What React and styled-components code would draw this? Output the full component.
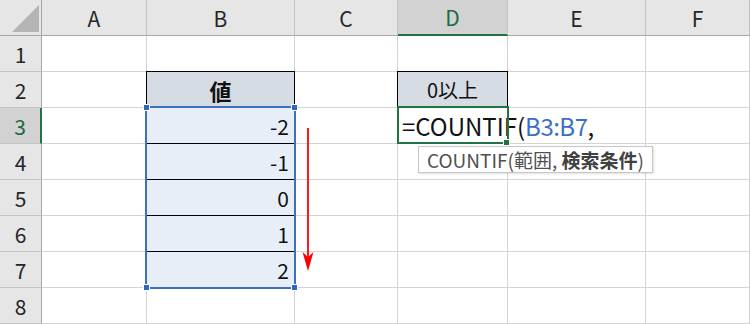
import React from "react";
import styled, { createGlobalStyle } from "styled-components";

const GlobalStyle = createGlobalStyle`
  html, body {
    margin: 0;
    padding: 0;
    background: #ffffff;
  }
  body {
    width: 750px;
    height: 324px;
    overflow: hidden;
    font-family: "Noto Sans CJK JP", "Noto Sans", sans-serif;
  }
`;

const COLS = [
  { id: "A", width: 105 },
  { id: "B", width: 148 },
  { id: "C", width: 103 },
  { id: "D", width: 110 },
  { id: "E", width: 138 },
  { id: "F", width: 104 },
];
const ROWS = [1, 2, 3, 4, 5, 6, 7, 8];
const VALUES = { 3: "-2", 4: "-1", 5: "0", 6: "1", 7: "2" };
const ACTIVE_COL = "D";
const ACTIVE_ROW = 3;

const Sheet = styled.div`
  display: grid;
  grid-template-columns: 42px ${COLS.map((c) => c.width + "px").join(" ")};
  grid-template-rows: repeat(9, 36px);
  width: 750px;
  height: 324px;
  overflow: hidden;
`;

const Corner = styled.div`
  box-sizing: border-box;
  background: #e6e6e6;
  border-right: 1px solid #a6a6a6;
  border-bottom: 1px solid #a6a6a6;

  svg {
    display: block;
  }
`;

const ColHead = styled.div`
  box-sizing: border-box;
  display: flex;
  align-items: center;
  justify-content: center;
  font-size: 21px;
  background: ${(p) => (p.$active ? "#d2d2d2" : "#e6e6e6")};
  color: ${(p) => (p.$active ? "#1d6b40" : "#262626")};
  border-right: 1px solid #c4c4c4;
  border-bottom: ${(p) => (p.$active ? "2px solid #217346" : "1px solid #a6a6a6")};
`;

const RowHead = styled.div`
  box-sizing: border-box;
  display: flex;
  align-items: center;
  justify-content: center;
  font-size: 21px;
  background: ${(p) => (p.$active ? "#d2d2d2" : "#e6e6e6")};
  color: ${(p) => (p.$active ? "#1d6b40" : "#262626")};
  border-right: ${(p) => (p.$active ? "2px solid #217346" : "1px solid #a6a6a6")};
  border-bottom: 1px solid #c4c4c4;
`;

const Cell = styled.div`
  position: relative;
  box-sizing: border-box;
  display: flex;
  align-items: center;
  background: #ffffff;
  border-right: 1px solid #d4d4d4;
  border-bottom: 1px solid #d4d4d4;
  white-space: nowrap;
`;

const TitleCell = styled(Cell)`
  justify-content: center;
  background: #d6dce4;
  border-right-color: #000000;
  border-bottom-color: #000000;
  box-shadow: -1px 0 0 #000000, 0 -1px 0 #000000, -1px -1px 0 #000000;
  font-size: ${(p) => (p.$bold ? "22px" : "20px")};
  font-weight: ${(p) => (p.$bold ? 700 : 400)};
  color: #111111;
`;

const ValueCell = styled(Cell)`
  justify-content: flex-end;
  padding-right: 5px;
  background: #e8eef8;
  border-bottom-color: ${(p) => (p.$last ? "#d4d4d4" : "#000000")};
  font-size: 21px;
  color: #111111;
`;

const EditCell = styled(Cell)`
  z-index: 1;
  padding-left: 4px;
  font-size: 24px;
  color: #111111;
`;

const RefText = styled.span`
  color: #3b6fc6;
  letter-spacing: -0.5px;
`;

const Caret = styled.span`
  display: inline-block;
  width: 1px;
  height: 33px;
  background: #000000;
`;

const EditFrame = styled.div`
  position: absolute;
  top: -2px;
  left: -1px;
  width: 112px;
  height: 38px;
  box-sizing: border-box;
  border: 2px solid #217346;
  z-index: 2;
  pointer-events: none;
`;

const FillHandle = styled.span`
  position: absolute;
  right: -3px;
  bottom: -4px;
  width: 5px;
  height: 5px;
  background: #217346;
  border: 1px solid #ffffff;
`;

const Tooltip = styled.div`
  position: absolute;
  top: 38px;
  left: 20px;
  height: 27px;
  box-sizing: border-box;
  padding: 0 8px;
  display: flex;
  align-items: center;
  background: #ffffff;
  border: 1px solid #c6c6c6;
  box-shadow: 1px 1px 2px rgba(0, 0, 0, 0.12);
  font-size: 19px;
  color: #505050;
  z-index: 3;

  b {
    font-weight: 700;
    color: #404040;
  }
`;

const Selection = styled.div`
  position: absolute;
  top: -2px;
  left: -2px;
  width: 151px;
  height: 183px;
  box-sizing: border-box;
  border: 2px solid #3a6fc4;
  z-index: 2;
  pointer-events: none;
`;

const Handle = styled.span`
  position: absolute;
  width: 5px;
  height: 5px;
  background: #2f67bf;
  border: 1px solid #ffffff;
  top: ${(p) => (p.$bottom ? "auto" : "-4px")};
  bottom: ${(p) => (p.$bottom ? "-4px" : "auto")};
  left: ${(p) => (p.$right ? "auto" : "-4px")};
  right: ${(p) => (p.$right ? "-4px" : "auto")};
`;

const Arrow = styled.svg`
  position: absolute;
  top: 20px;
  left: 6px;
  z-index: 2;
`;

const CornerTriangle = () => (
  <svg width="41" height="35" viewBox="0 0 41 35">
    <polygon points="39,5 39,32 12,32" fill="#b4b4b4" />
  </svg>
);

const DownArrow = () => (
  <Arrow width="14" height="146" viewBox="0 0 14 146">
    <line x1="7" y1="0" x2="7" y2="130" stroke="#ff1a1a" strokeWidth="2" />
    <polygon points="1.5,124 7,143 12.5,124 7,129" fill="#ff0000" />
  </Arrow>
);

function renderCell(row, col) {
  const key = `${col}${row}`;
  if (row === 2 && col === "B") return <TitleCell key={key} $bold>値</TitleCell>;
  if (row === 2 && col === "D") return <TitleCell key={key}>0以上</TitleCell>;
  if (col === "B" && VALUES[row] !== undefined) {
    return (
      <ValueCell key={key} $last={row === 7}>
        {VALUES[row]}
        {row === 3 && (
          <Selection>
            <Handle />
            <Handle $right />
            <Handle $bottom />
            <Handle $bottom $right />
          </Selection>
        )}
      </ValueCell>
    );
  }
  if (row === 3 && col === "C") {
    return (
      <Cell key={key}>
        <DownArrow />
      </Cell>
    );
  }
  if (row === 3 && col === "D") {
    return (
      <EditCell key={key}>
        =COUNTIF(<RefText>B3:B7</RefText>,<Caret />
        <EditFrame>
          <FillHandle />
        </EditFrame>
        <Tooltip>
          COUNTIF(範囲,&nbsp;<b>検索条件</b>)
        </Tooltip>
      </EditCell>
    );
  }
  return <Cell key={key} />;
}

export default function App() {
  return (
    <>
      <GlobalStyle />
      <Sheet>
        <Corner>
          <CornerTriangle />
        </Corner>
        {COLS.map((c) => (
          <ColHead key={c.id} $active={c.id === ACTIVE_COL}>
            {c.id}
          </ColHead>
        ))}
        {ROWS.map((r) => (
          <React.Fragment key={r}>
            <RowHead $active={r === ACTIVE_ROW}>{r}</RowHead>
            {COLS.map((c) => renderCell(r, c.id))}
          </React.Fragment>
        ))}
      </Sheet>
    </>
  );
}
